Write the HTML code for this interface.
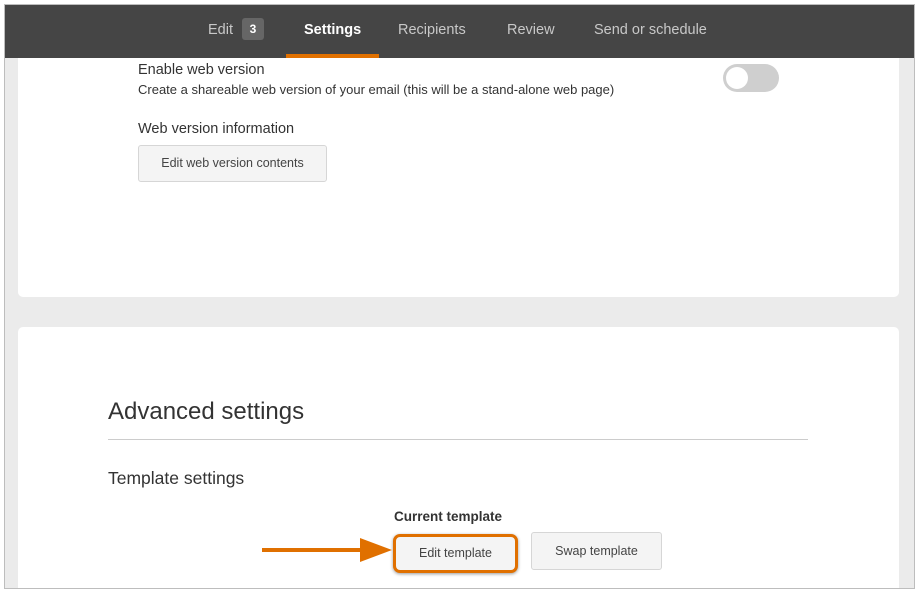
<!DOCTYPE html><html><head><style>
*{margin:0;padding:0;box-sizing:border-box}
body{width:918px;height:592px;background:#fff;font-family:"Liberation Sans",sans-serif;position:relative;overflow:hidden}
.frame{position:absolute;left:4px;top:4px;width:911px;height:585px;border:1px solid #bdbdbd;background:#ebebeb;overflow:hidden}
.bar{position:absolute;left:0;top:0;width:911px;height:53px;background:#454545}
.tab{position:absolute;top:17px;font-size:14.5px;color:#c8c8c8}
.card{position:absolute;left:13px;width:881px;background:#fff;border-radius:5px}
.btn{position:absolute;background:#f4f4f4;border:1px solid #d6d6d6;border-radius:3px;font-size:12.5px;color:#444;text-align:center}
</style></head><body>
<div class="frame">
<div class="card" style="top:30px;height:262px"></div>
<div class="card" style="top:322px;height:263px;border-radius:5px 5px 0 0"></div>
<div class="bar">
<div class="tab" style="left:203px">Edit</div>
<div style="position:absolute;left:237px;top:13px;width:22px;height:22px;background:#666;border-radius:3px;color:#fff;font-size:12px;font-weight:bold;text-align:center;line-height:22px">3</div>
<div class="tab" style="left:299px;color:#fff;font-weight:bold">Settings</div>
<div class="tab" style="left:393px">Recipients</div>
<div class="tab" style="left:502px">Review</div>
<div class="tab" style="left:589px">Send or schedule</div>
<div style="position:absolute;left:281px;top:49px;width:93px;height:4px;background:#e07000"></div>
</div>
<div style="position:absolute;left:133px;top:57px;font-size:14.5px;color:#333">Enable web version</div>
<div style="position:absolute;left:133px;top:77px;font-size:13px;color:#333">Create a shareable web version of your email (this will be a stand-alone web page)</div>
<div style="position:absolute;left:718px;top:59px;width:56px;height:28px;border-radius:14px;background:#cfcfcf"><div style="position:absolute;left:3px;top:3px;width:22px;height:22px;border-radius:11px;background:#fff"></div></div>
<div style="position:absolute;left:133px;top:116px;font-size:14.5px;color:#333">Web version information</div>
<div class="btn" style="left:133px;top:140px;width:189px;height:37px;line-height:35px">Edit web version contents</div>
<div style="position:absolute;left:103px;top:393px;font-size:24px;color:#333">Advanced settings</div>
<div style="position:absolute;left:103px;top:434px;width:700px;height:1px;background:#ccc"></div>
<div style="position:absolute;left:103px;top:463px;font-size:17.5px;color:#333">Template settings</div>
<div style="position:absolute;left:389px;top:504px;font-size:13.5px;font-weight:bold;color:#333">Current template</div>
<div class="btn" style="left:388px;top:529px;width:125px;height:39px;line-height:33px;border:3px solid #e07000;border-radius:7px;box-shadow:0 1px 3px rgba(0,0,0,.4)">Edit template</div>
<div class="btn" style="left:526px;top:527px;width:131px;height:38px;line-height:36px">Swap template</div>
<svg style="position:absolute;left:255px;top:530px" width="135" height="30"><line x1="2" y1="15" x2="105" y2="15" stroke="#e07000" stroke-width="4"/><polygon points="100,3 132,15 100,27" fill="#e07000"/></svg>
</div>
</body></html>
